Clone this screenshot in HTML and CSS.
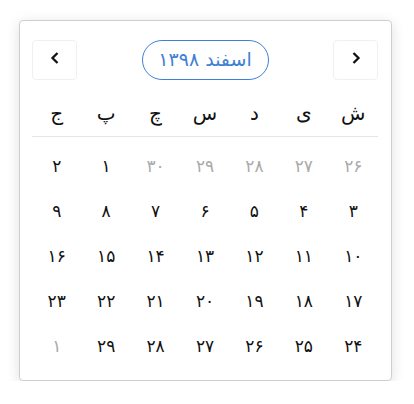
FILE: index.html
```html
<!DOCTYPE html>
<html lang="fa">
<head>
<meta charset="utf-8">
<link rel="stylesheet" href="styles.css">
</head>
<body>
<div class="card">
  <div class="header">
    <button class="nav">
      <svg width="10" height="12" viewBox="0 0 10 12"><path d="M7.5 1 L2.5 6 L7.5 11" fill="none" stroke="#111" stroke-width="2.3"/></svg>
    </button>
    <div class="month">اسفند ۱۳۹۸</div>
    <button class="nav">
      <svg width="10" height="12" viewBox="0 0 10 12"><path d="M2.5 1 L7.5 6 L2.5 11" fill="none" stroke="#111" stroke-width="2.3"/></svg>
    </button>
  </div>
  <div class="weekdays" dir="rtl">
    <span>ش</span><span>ی</span><span>د</span><span>س</span><span>چ</span><span>پ</span><span>ج</span>
  </div>
  <div class="days" dir="rtl">
    <span class="out">۲۶</span><span class="out">۲۷</span><span class="out">۲۸</span><span class="out">۲۹</span><span class="out">۳۰</span><span>۱</span><span>۲</span>
    <span>۳</span><span>۴</span><span>۵</span><span>۶</span><span>۷</span><span>۸</span><span>۹</span>
    <span>۱۰</span><span>۱۱</span><span>۱۲</span><span>۱۳</span><span>۱۴</span><span>۱۵</span><span>۱۶</span>
    <span>۱۷</span><span>۱۸</span><span>۱۹</span><span>۲۰</span><span>۲۱</span><span>۲۲</span><span>۲۳</span>
    <span>۲۴</span><span>۲۵</span><span>۲۶</span><span>۲۷</span><span>۲۸</span><span>۲۹</span><span class="out">۱</span>
  </div>
</div>
</body>
</html>
```
FILE: styles.css
```css
html, body {
  margin: 0;
  padding: 0;
  background: #fff;
}
body {
  font-family: "DejaVu Sans", sans-serif;
  color: #111;
}
.card {
  box-sizing: border-box;
  width: 373px;
  height: 361px;
  margin: 20px 0 0 19px;
  border: 1px solid #cfcfcf;
  border-radius: 4px;
  box-shadow: 0 3px 14px rgba(0, 0, 0, 0.13);
  padding: 19px 13px 0 12px;
  background: #fff;
}
.header {
  display: flex;
  justify-content: space-between;
  align-items: center;
  height: 40px;
}
.nav {
  box-sizing: border-box;
  width: 45px;
  height: 40px;
  border: 1px solid #f0f0f0;
  border-radius: 4px;
  background: #fff;
  padding: 0 0 4px 0;
  display: flex;
  align-items: center;
  justify-content: center;
}
.month {
  box-sizing: border-box;
  width: 127px;
  height: 40px;
  border: 1px solid #3f7fd6;
  border-radius: 20px;
  color: #3f7fd6;
  font-size: 19px;
  display: flex;
  align-items: center;
  justify-content: center;
  padding-bottom: 2px;
}
.weekdays {
  display: grid;
  grid-template-columns: repeat(7, 1fr);
  margin-top: 16px;
  height: 41px;
  border-bottom: 1px solid #e6e6e6;
  font-size: 20px;
  align-items: center;
  text-align: center;
  padding-bottom: 6px;
  box-sizing: border-box;
}
.weekdays span {
  line-height: 34px;
}
.days {
  display: grid;
  grid-template-columns: repeat(7, 1fr);
  grid-auto-rows: 45px;
  padding-top: 6px;
  font-size: 17px;
  align-items: center;
  text-align: center;
}
.days .out {
  color: #aaa;
}
```
